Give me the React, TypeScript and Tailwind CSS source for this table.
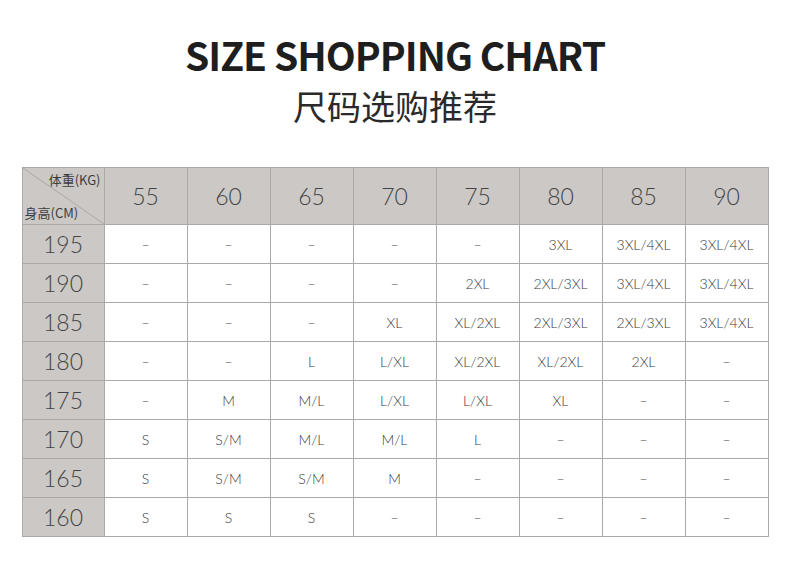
const weights = ['55', '60', '65', '70', '75', '80', '85', '90'];

const rows: [string, string[]][] = [
  ['195', ['–', '–', '–', '–', '–', '3XL', '3XL/4XL', '3XL/4XL']],
  ['190', ['–', '–', '–', '–', '2XL', '2XL/3XL', '3XL/4XL', '3XL/4XL']],
  ['185', ['–', '–', '–', 'XL', 'XL/2XL', '2XL/3XL', '2XL/3XL', '3XL/4XL']],
  ['180', ['–', '–', 'L', 'L/XL', 'XL/2XL', 'XL/2XL', '2XL', '–']],
  ['175', ['–', 'M', 'M/L', 'L/XL', 'L/XL', 'XL', '–', '–']],
  ['170', ['S', 'S/M', 'M/L', 'M/L', 'L', '–', '–', '–']],
  ['165', ['S', 'S/M', 'S/M', 'M', '–', '–', '–', '–']],
  ['160', ['S', 'S', 'S', '–', '–', '–', '–', '–']],
];

const cjk = "font-['Noto_Sans_CJK_SC','Noto_Sans',sans-serif]";
const num = "font-['Lato','Noto_Sans_CJK_SC',sans-serif]";

export default function App() {
  return (
    <div className="w-[790px] h-[570px] bg-white flex flex-col items-center">
      <h1 className={`${cjk} mt-[29px] text-[39px] leading-[50px] font-bold text-[#1e1e1e] tracking-[-1px]`}>
        SIZE SHOPPING CHART
      </h1>
      <h2 className={`${cjk} mt-[4px] text-[34px] leading-[46px] text-[#2a2a2a] font-normal`}>
        尺码选购推荐
      </h2>

      <table className={`${num} mt-[38px] table-fixed border-collapse border border-[#a9a9a9] text-[#4a4a4a]`}>
        <colgroup>
          <col className="w-[82px]" />
          {weights.map((w) => (
            <col key={w} className="w-[83px]" />
          ))}
        </colgroup>
        <thead>
          <tr className="h-[57px] bg-[#cbc8c6]">
            <th className="relative border border-[#a9a9a9] p-0 font-normal">
              <svg className="absolute inset-0 w-full h-full" viewBox="0 0 82 57" preserveAspectRatio="none">
                <line x1="0" y1="0" x2="82" y2="57" stroke="#a3a09e" strokeWidth="0.8" />
              </svg>
              <div className={`${cjk} relative flex flex-col h-[56px] text-[13px] leading-[16px] text-[#3c3c3c]`}>
                <span className="self-end pr-[3px] pt-[4px]">体重(KG)</span>
                <span className="self-start pl-[2px] mt-auto pb-[3px]">身高(CM)</span>
              </div>
            </th>
            {weights.map((w) => (
              <th key={w} className="border border-[#a9a9a9] font-light text-[23px] text-[#444444]">
                {w}
              </th>
            ))}
          </tr>
        </thead>
        <tbody>
          {rows.map(([h, sizes]) => (
            <tr key={h} className="h-[39px]">
              <td className="bg-[#cbc8c6] border border-[#a9a9a9] text-center font-light text-[23px] leading-none text-[#444444]">
                {h}
              </td>
              {sizes.map((s, i) => (
                <td key={i} className="border border-[#a9a9a9] text-center text-[14px] font-light text-[#3a3a3a]">
                  {s}
                </td>
              ))}
            </tr>
          ))}
        </tbody>
      </table>
    </div>
  );
}
